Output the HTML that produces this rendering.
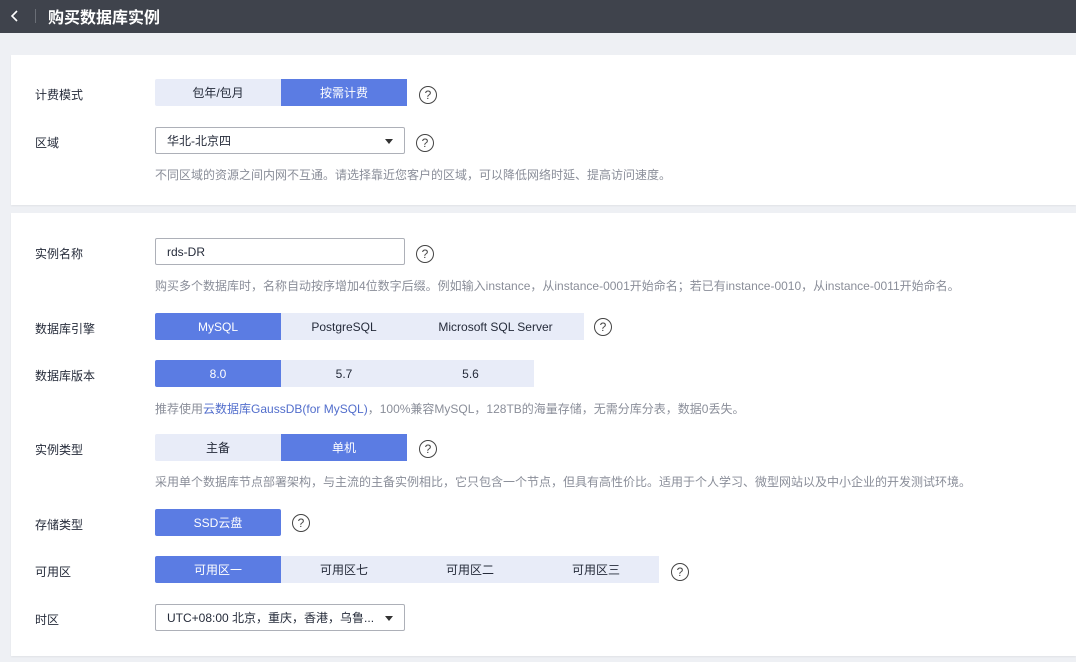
<!DOCTYPE html>
<html><head><meta charset="utf-8"><style>
*{margin:0;padding:0;box-sizing:border-box}
body{width:1076px;height:662px;background:#eef0f4;font-family:"Liberation Sans","Noto Sans CJK SC",sans-serif;font-size:12px;color:#252b3a;position:relative;overflow:hidden}
.hdr{position:absolute;left:0;top:0;width:1076px;height:33px;background:#3f434c;color:#fff}
.hdr .t{position:absolute;left:48px;top:4px;font-size:16px;font-weight:bold}
.hdr .sep{position:absolute;left:35px;top:9px;width:1px;height:14px;background:#6a6e76}
.panel{position:absolute;left:11px;right:0;background:#fff;box-shadow:0 1px 2px rgba(0,0,0,.06)}
.lab{position:absolute;left:35px;font-size:12px;color:#252b3a}
.bg{position:absolute;display:flex;height:27px}
.bg div{width:126px;height:27px;line-height:29px;text-align:center;background:#e8ecf8;color:#252b3a}
.bg div.on{background:#5b7ce3;color:#fff}
.bg div:first-child{border-radius:2px 0 0 2px}
.sel{position:absolute;left:155px;width:250px;height:27px;border:1px solid #adb0b8;border-radius:2px;background:#fff;line-height:27px;padding-left:11px}
.sel .ar{position:absolute;right:11px;top:11px;width:0;height:0;border-left:4px solid transparent;border-right:4px solid transparent;border-top:5px solid #333}
.hint{position:absolute;left:155px;color:#8a8e99;font-size:12px}
.q{position:absolute;width:18px;height:18px;border:1.3px solid #444;border-radius:50%;text-align:center;line-height:16px;font-size:12px;color:#444}
</style></head><body>
<div class="hdr"><svg style="position:absolute;left:10px;top:9px" width="10" height="14"><path d="M7 2 L2 7 L7 12" stroke="#fff" stroke-width="1.6" fill="none"/></svg><div class="sep"></div><div class="t">购买数据库实例</div></div>

<div class="panel" style="top:55px;height:150px"></div>
<div class="panel" style="top:213px;height:443px"></div>

<div class="lab" style="top:86px">计费模式</div>
<div class="bg" style="left:155px;top:79px"><div>包年/包月</div><div class="on">按需计费</div></div>
<div class="q" style="left:419px;top:86px">?</div>

<div class="lab" style="top:134px">区域</div>
<div class="sel" style="top:127px">华北-北京四<span class="ar"></span></div>
<div class="q" style="left:416px;top:134px">?</div>
<div class="hint" style="top:166px">不同区域的资源之间内网不互通。请选择靠近您客户的区域，可以降低网络时延、提高访问速度。</div>

<div class="lab" style="top:245px">实例名称</div>
<div class="sel" style="top:238px">rds-DR</div>
<div class="q" style="left:416px;top:245px">?</div>
<div class="hint" style="top:277px">购买多个数据库时，名称自动按序增加4位数字后缀。例如输入instance，从instance-0001开始命名；若已有instance-0010，从instance-0011开始命名。</div>

<div class="lab" style="top:320px">数据库引擎</div>
<div class="bg" style="left:155px;top:313px"><div class="on">MySQL</div><div>PostgreSQL</div><div style="width:177px">Microsoft SQL Server</div></div>
<div class="q" style="left:594px;top:318px">?</div>

<div class="lab" style="top:367px">数据库版本</div>
<div class="bg" style="left:155px;top:360px"><div class="on">8.0</div><div>5.7</div><div style="width:127px">5.6</div></div>
<div class="hint" style="top:400px">推荐使用<span style="color:#526ecc">云数据库GaussDB(for MySQL)</span>，100%兼容MySQL，128TB的海量存储，无需分库分表，数据0丢失。</div>

<div class="lab" style="top:441px">实例类型</div>
<div class="bg" style="left:155px;top:434px"><div>主备</div><div class="on">单机</div></div>
<div class="q" style="left:419px;top:440px">?</div>
<div class="hint" style="top:473px">采用单个数据库节点部署架构，与主流的主备实例相比，它只包含一个节点，但具有高性价比。适用于个人学习、微型网站以及中小企业的开发测试环境。</div>

<div class="lab" style="top:516px">存储类型</div>
<div class="bg" style="left:155px;top:509px"><div class="on" style="border-radius:2px">SSD云盘</div></div>
<div class="q" style="left:292px;top:514px">?</div>

<div class="lab" style="top:563px">可用区</div>
<div class="bg" style="left:155px;top:556px"><div class="on">可用区一</div><div>可用区七</div><div>可用区二</div><div>可用区三</div></div>
<div class="q" style="left:671px;top:563px">?</div>

<div class="lab" style="top:611px">时区</div>
<div class="sel" style="top:604px">UTC+08:00 北京，重庆，香港，乌鲁...<span class="ar"></span></div>
</body></html>
